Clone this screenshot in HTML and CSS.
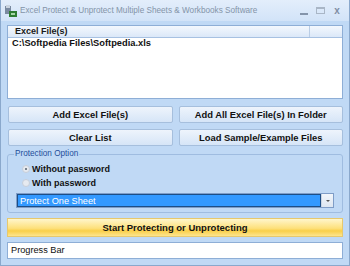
FILE: index.html
```html
<!DOCTYPE html>
<html>
<head>
<meta charset="utf-8">
<link rel="stylesheet" href="styles.css">
</head>
<body>
<div class="window">
  <div class="titlebar">
    <svg class="appicon" width="14" height="14" viewBox="0 0 14 14">
      <rect x="1" y="2" width="6" height="8" fill="#7a8aa0"/>
      <rect x="2" y="1" width="4" height="3" fill="#c9d3df"/>
      <rect x="5" y="7" width="8" height="6" fill="#2e7d32"/>
      <rect x="7" y="9" width="4" height="2" fill="#a5d6a7"/>
    </svg>
    <span class="title">Excel Protect &amp; Unprotect Multiple Sheets &amp; Workbooks Software</span>
    <div class="controls">
      <span class="ctl min"></span>
      <span class="ctl max"></span>
      <span class="ctl close">x</span>
    </div>
  </div>
  <div class="body">
    <div class="listbox">
      <div class="listhead"><span class="col1">Excel File(s)</span><span class="col2"></span></div>
      <div class="listitem">C:\Softpedia Files\Softpedia.xls</div>
    </div>
    <div class="buttons">
      <button class="btn">Add Excel File(s)</button>
      <button class="btn">Add All Excel File(s) In Folder</button>
      <button class="btn">Clear List</button>
      <button class="btn">Load Sample/Example Files</button>
    </div>
    <fieldset class="group">
      <legend>Protection Option</legend>
      <label class="radio"><span class="dot on"></span>Without password</label>
      <label class="radio"><span class="dot"></span>With password</label>
      <div class="select"><span class="selval">Protect One Sheet</span><span class="arrow"></span></div>
    </fieldset>
    <button class="start">Start Protecting or Unprotecting</button>
    <div class="progress">Progress Bar</div>
  </div>
</div>
</body>
</html>
```

FILE: styles.css
```css
* { box-sizing: border-box; }
html, body { margin: 0; padding: 0; }
body { width: 350px; height: 266px; overflow: hidden; font-family: "Liberation Sans", Arial, sans-serif; background: #bcd6f4; }
.window { width: 350px; height: 266px; background: #c0d9f5; border: 1px solid #8aa8cc; border-top: none; display: flex; flex-direction: column; }
.titlebar { height: 21px; display: flex; align-items: center; padding: 0 8px 0 3px; background: linear-gradient(#e3eefb, #d2e3f8); }
.appicon { flex: none; margin-right: 2px; }
.title { font-size: 8.2px; color: #8494a8; white-space: nowrap; flex: 1; }
.controls { display: flex; gap: 8px; align-items: center; }
.ctl { display: block; width: 8px; height: 8px; color: #7f8ea3; font-size: 10px; line-height: 8px; text-align: center; }
.min { border-bottom: 2px solid #8494aa; height: 5px; margin-top: 3px; }
.max { border: 1px solid #a9b6c6; border-top-width: 2px; width: 9px; height: 7px; }
.close { font-weight: bold; }
.body { flex: 1; padding: 4px 6px 0 6px; display: flex; flex-direction: column; }
.listbox { height: 74px; background: #fff; border: 1px solid #8eaed6; }
.listhead { height: 12px; display: flex; background: linear-gradient(#f4f8fe, #dbe8f8); border-bottom: 1px solid #a7c1e2; font-size: 9px; font-weight: bold; color: #1a1a1a; line-height: 11px; }
.col1 { width: 302px; padding-left: 7px; border-right: 1px solid #b9cde6; }
.col2 { flex: 1; }
.listitem { font-size: 9.3px; font-weight: bold; color: #111; padding: 0 4px; line-height: 11px; }
.buttons { display: grid; grid-template-columns: 1fr 1fr; column-gap: 6px; row-gap: 6px; margin-top: 7px; padding: 0 0 0 1px; }
.btn { height: 17px; font-family: inherit; font-size: 9.4px; font-weight: bold; color: #111; border: 1px solid #a6bfdd; border-radius: 2px; background: linear-gradient(#eef4fc, #d6e5f7); padding: 0; }
.group { margin: 3px 0 0 0; padding: 3px 8px 6px 8px; border: 1px solid #9fbce0; border-radius: 3px; height: 64px; }
.group legend { font-size: 8.2px; color: #1f4e9a; padding: 0 1px; margin-left: -2px; line-height: 10px; }
.radio { display: flex; align-items: center; font-size: 9px; font-weight: bold; color: #111; height: 14px; padding-left: 6px; }
.dot { width: 8px; height: 8px; border-radius: 50%; background: #e6eaf0; border: 1px solid #c6ceda; margin-right: 2px; position: relative; }
.dot.on::after { content: ""; position: absolute; left: 2px; top: 2px; width: 2px; height: 2px; background: #55606e; border-radius: 50%; }
.select { margin-top: 3px; height: 15px; display: flex; border: 1px solid #7f9dc7; background: #fff; }
.selval { flex: 1; background: #3399ff; color: #fff; font-size: 9.2px; line-height: 12px; padding-left: 2px; border: 1px solid #1d4e86; }
.arrow { width: 12px; background: linear-gradient(#f2f6fb, #dde6f1); position: relative; border-left: 1px solid #c8d4e3; }
.arrow::after { content: ""; position: absolute; left: 4px; top: 6px; border: 2px solid transparent; border-top: 2px solid #555; }
.start { margin-top: 5px; height: 19px; font-family: inherit; font-size: 9.5px; font-weight: bold; color: #111; border: 1px solid #e6c86e; background: linear-gradient(#fff6cc, #fde07a 55%, #f9cf4a 70%, #fde58f); padding: 0; }
.progress { margin-top: 5px; height: 17px; background: #fff; border: 1px solid #8eaed6; font-size: 9.2px; color: #111; line-height: 15px; padding-left: 3px; }
```
